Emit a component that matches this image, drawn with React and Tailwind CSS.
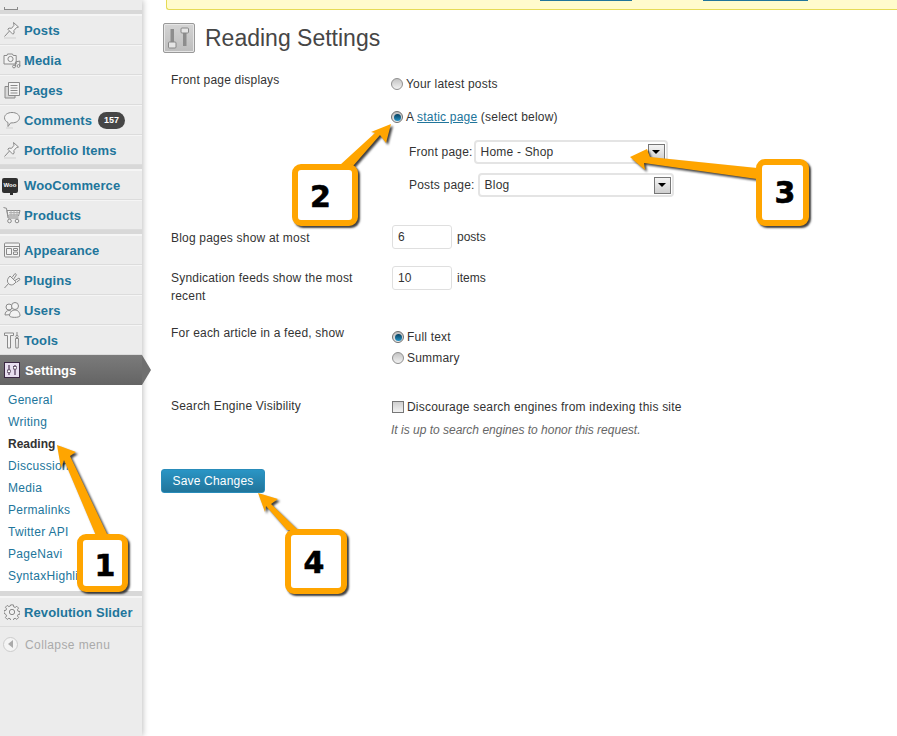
import { useState } from "react";

const iconClass = "w-[18px] h-[18px] shrink-0 fill-[#f3f3f3] stroke-[#8a8a8a]";

function PinIcon() {
    return (
        <svg viewBox="0 0 18 18" className={iconClass} strokeWidth="1">
            <path d="M10.500 1.500l5 4.500-2 .6-2.600 3 .2 2.600-1.300 1-5-5 1.200-1.100 2.600.2 2.400-3z" />
            <path d="M6.500 10L1.500 15.500" fill="none" />
            <path d="M1 17h12" fill="none" stroke="#cfcfcf" />
        </svg>
    );
}

function MediaIcon() {
    return (
        <svg viewBox="0 0 18 18" className={iconClass} strokeWidth="1">
            <path d="M1 4.500h3l.5-1.500h5l.7 1.500h3v8.500H1z" />
            <circle cx="7.500" cy="8" r="2.600" />
            <circle cx="11" cy="15.500" r="1.400" />
            <circle cx="15.500" cy="15" r="1.400" />
            <path d="M12.400 15.500V11l4.400-1v5" fill="none" />
        </svg>
    );
}

function PagesIcon() {
    return (
        <svg viewBox="0 0 18 18" className={iconClass} strokeWidth="1">
            <path d="M2 5.500h10v11.500H2z" fill="#d8d8d8" />
            <path d="M5.500 1.500h11v13h-11z" />
            <path d="M7.500 4.500h7M7.500 7h7M7.500 9.500h7M7.500 12h7" fill="none" />
        </svg>
    );
}

function CommentIcon() {
    return (
        <svg viewBox="0 0 18 18" className={iconClass} strokeWidth="1">
            <path d="M9 1.500c4.400 0 7.500 2.300 7.500 5.200s-3.100 5.200-7.500 5.200H7.600L5 15.500v-4C3 10.600 1.500 9 1.500 6.700 1.500 3.800 4.600 1.500 9 1.500z" />
            <path d="M3 17h7" fill="none" stroke="#cfcfcf" />
        </svg>
    );
}

function WooIcon() {
    return (
        <div className="relative w-4 h-[15px] shrink-0 rounded-[2px] bg-[#2f2f2f] flex items-center justify-center ml-[-1px] mr-[3px]">
            <span className="text-[6px] font-bold leading-none text-white">Woo</span>
            <span className="absolute -bottom-[2px] left-[8px] w-[3px] h-[3px] bg-[#2f2f2f]"></span>
        </div>
    );
}

function CartIcon() {
    return (
        <svg viewBox="0 0 18 18" className={iconClass} strokeWidth="1">
            <path d="M.5 1.500l3 .8 1.500 9.700h10.500" fill="none" />
            <path d="M4 4.500h13l-1.500 5.500H5z" />
            <path d="M6 6.500h10M6 8.300h9.500M8 4.500v5.500M11 4.500v5.500M14 4.500v5.500" fill="none" stroke="#b0b0b0" />
            <circle cx="6.500" cy="15" r="1.800" />
            <circle cx="14" cy="15" r="1.800" />
        </svg>
    );
}

function AppearanceIcon() {
    return (
        <svg viewBox="0 0 18 18" className={iconClass} strokeWidth="1">
            <rect x="1.500" y="2" width="15" height="14" rx="1" />
            <path d="M1.500 5.500h15" fill="none" />
            <path d="M3.500 7.500h5v6h-5zM10.500 7.500h4v2h-4zM10.500 11h4v2.500h-4z" />
        </svg>
    );
}

function PluginIcon() {
    return (
        <svg viewBox="0 0 18 18" className={iconClass} strokeWidth="1">
            <path d="M7 5l6 6-2 2c-1.700 1.300-3.800 1.300-5.300-.2S4 9 5.300 7.100z" />
            <path d="M9 6.500l3-4 1.500 1.200-2.800 4.300M12 9.500l4-2.500 1 1.500-3.500 2.700" />
            <path d="M5.500 12.500L1.500 17" fill="none" />
        </svg>
    );
}

function UsersIcon() {
    return (
        <svg viewBox="0 0 18 18" className={iconClass} strokeWidth="1">
            <circle cx="6" cy="6" r="3" />
            <circle cx="12" cy="5" r="3.500" />
            <path d="M2 14c0-3 1.800-4.500 4-4.500S9 11 9 13.500z" />
            <path d="M6.500 15c0-3.500 2.500-6 5.500-6s5 2.500 5 6c-1 1.800-9.500 1.800-10.500 0z" />
        </svg>
    );
}

function ToolsIcon() {
    return (
        <svg viewBox="0 0 18 18" className={iconClass} strokeWidth="1">
            <path d="M1.500 2h9v2.500H7.500V17h-3V4.500h-3z" />
            <path d="M14 1v4.500M12.500 7.500h3l-.3 9.500h-2.400z" />
            <circle cx="14" cy="5.500" r="1.200" />
        </svg>
    );
}

function SettingsIcon() {
    return (
        <svg viewBox="0 0 18 18" className="w-[18px] h-[18px] shrink-0" fill="none">
            <rect x="1.500" y="1.500" width="15" height="15" fill="#e8dff0" stroke="#3a2742" />
            <path d="M6 4v10M12 4v10" stroke="#6b5773" strokeWidth="1.500" />
            <rect x="4.500" y="9" width="3" height="2.500" fill="#fff" stroke="#3a2742" strokeWidth=".6" />
            <rect x="10.500" y="5.500" width="3" height="2.500" fill="#fff" stroke="#3a2742" strokeWidth=".6" />
        </svg>
    );
}

function GearIcon() {
    return (
        <svg viewBox="0 0 18 18" className="w-4 h-4 shrink-0 ml-[1px] mr-[1px] fill-[#efefef] stroke-[#7d7d7d]" strokeWidth="1">
            <path d="M7.500 1h3l.4 2.200 1.600.7 1.900-1.300 2 2-1.300 1.900.7 1.600 2.200.4v2.900l-2.200.4-.7 1.600 1.300 1.900-2 2-1.900-1.300-1.600.7-.4 2.200h-3l-.4-2.200-1.600-.7-1.900 1.300-2-2 1.300-1.900-.7-1.600L0 10.400V7.500l2.200-.4.7-1.600L1.600 3.600l2-2 1.900 1.300 1.600-.7z" />
            <circle cx="9" cy="9" r="3" />
        </svg>
    );
}

function MenuRow({ icon, label, badge }) {
    return (
        <div className="flex items-center h-[30px] pl-[3px] border-t border-t-[#f5f5f5] border-b border-b-[#dcdcdc] text-[13px] font-bold text-[#21759b]">
            {icon}
            <span className="ml-[3px] mt-[2px] tracking-[0.1px] whitespace-nowrap">{label}</span>
            {badge && (
                <span className="ml-[6px] mt-[1px] w-[27px] h-[17px] rounded-full bg-[#464646] text-white text-[9px] leading-[17px] text-center">
                    {badge}
                </span>
            )}
        </div>
    );
}

function Separator() {
    return <div className="h-[5px] bg-[#d8d8d8] border-b border-b-[#f5f5f5]"></div>;
}

function Radio({ checked }) {
    return (
        <span className={checked
            ? "inline-flex items-center justify-center w-3 h-3 shrink-0 rounded-full border border-[#6f6f6f] bg-gradient-to-b from-[#bdbdbd] to-[#eeeeee]"
            : "inline-flex items-center justify-center w-3 h-3 shrink-0 rounded-full border border-[#8f8f8f] bg-gradient-to-b from-[#c4c4c4] to-[#f2f2f2]"}
        >
            {checked && <span className="w-[7px] h-[7px] rounded-full bg-gradient-to-b from-[#08405f] to-[#2595c8]"></span>}
        </span>
    );
}

function SelectBox({ value, className }) {
    return (
        <div className={`flex items-center justify-between h-[24px] pl-[5px] pr-[1px] border-2 border-[#e4e4e4] rounded-[4px] bg-white text-[12px] text-[#333] ${className}`}>
            <span>{value}</span>
            <span className="flex items-center justify-center w-[17px] h-[17px] border border-[#777] bg-gradient-to-b from-[#f4f4f4] to-[#cfcfcf]">
                <span className="w-0 h-0 border-x-[4px] border-x-transparent border-t-[4px] border-t-black"></span>
            </span>
        </div>
    );
}

function NumberInput({ value, unit }) {
    return (
        <div className="flex items-center">
            <div className="w-[60px] h-[24px] pl-[5px] border border-[#dfdfdf] rounded-[3px] bg-white text-[12px] leading-[22px] text-[#333]">
                {value}
            </div>
            <span className="ml-[5px] text-[12px] text-[#333]">{unit}</span>
        </div>
    );
}

function Callout({ n, className }) {
    return (
        <div className={`absolute flex items-center justify-center border-[6px] border-[#ffa500] rounded-[9px] bg-white shadow-[2px_2px_2px_rgba(0,0,0,0.75)] font-['DejaVu_Sans',sans-serif] font-bold text-[30px] leading-none text-black [-webkit-text-stroke:0.6px_black] ${className}`}>
            {n}
        </div>
    );
}

const subMenu = ["General", "Writing", "Reading", "Discussion", "Media", "Permalinks", "Twitter API", "PageNavi", "SyntaxHighlighter"];

export default function App() {
    const [current] = useState("Reading");

    return (
        <div className="relative flex w-[897px] h-[736px] overflow-hidden bg-white font-['Liberation_Sans',Arial,sans-serif] text-[12px] text-[#333]">
            {/* Sidebar */}
            <aside className="w-[142px] shrink-0 bg-[#ececec] shadow-[1px_0_6px_rgba(0,0,0,0.25)] z-10">
                <div className="h-[10px] flex items-end pl-[4px]">
                    <div className="w-[14px] h-[3px] border-x border-b border-[#8a8a8a]"></div>
                </div>
                <Separator />
                <MenuRow icon={<PinIcon />} label="Posts" />
                <MenuRow icon={<MediaIcon />} label="Media" />
                <MenuRow icon={<PagesIcon />} label="Pages" />
                <MenuRow icon={<CommentIcon />} label="Comments" badge="157" />
                <MenuRow icon={<PinIcon />} label="Portfolio Items" />
                <Separator />
                <MenuRow icon={<WooIcon />} label="WooCommerce" />
                <MenuRow icon={<CartIcon />} label="Products" />
                <Separator />
                <MenuRow icon={<AppearanceIcon />} label="Appearance" />
                <MenuRow icon={<PluginIcon />} label="Plugins" />
                <MenuRow icon={<UsersIcon />} label="Users" />
                <MenuRow icon={<ToolsIcon />} label="Tools" />

                <div className="relative flex items-center h-[30px] pl-[3px] bg-gradient-to-b from-[#7b7b7b] to-[#646464] text-[13px] font-bold text-white">
                    <SettingsIcon />
                    <span className="ml-[4px] mt-[2px]">Settings</span>
                    <span className="absolute left-full top-0 w-0 h-0 border-y-[15px] border-y-transparent border-l-[9px] border-l-[#6f6f6f]"></span>
                </div>

                <div className="bg-white pt-[4px] h-[206px] overflow-hidden tracking-[0.3px]">
                    {subMenu.map((item) => (
                        <div
                            key={item}
                            className={item === current
                                ? "h-[22px] pl-2 leading-[22px] font-bold tracking-normal text-[#333]"
                                : "h-[22px] pl-2 leading-[22px] text-[#21759b]"}
                        >
                            {item}
                        </div>
                    ))}
                </div>
                <div className="h-[6px] bg-[#d8d8d8] border-b border-b-[#f5f5f5]"></div>

                <MenuRow icon={<GearIcon />} label="Revolution Slider" />
                <div className="flex items-center h-[34px] pl-[3px] text-[12px] text-[#aaa]">
                    <span className="flex items-center justify-center w-[15px] h-[15px] rounded-full border border-[#ccc] bg-[#f4f4f4]">
                        <span className="w-0 h-0 border-y-[4px] border-y-transparent border-r-[5px] border-r-[#aaa]"></span>
                    </span>
                    <span className="ml-[7px] mt-[2px] tracking-[0.4px]">Collapse menu</span>
                </div>
            </aside>

            {/* Content */}
            <main className="flex-1 min-w-0">
                <div className="relative h-[10px] ml-[24px] border-l border-b border-[#e6db55] rounded-bl-[3px] bg-[#fffbcc]">
                    <span className="absolute top-0 left-[373px] w-[92px] h-px bg-[#21759b]"></span>
                    <span className="absolute top-0 left-[536px] w-[105px] h-px bg-[#21759b]"></span>
                </div>

                <div className="flex items-center mt-[13px] ml-[21px]">
                    <div className="flex items-center justify-center w-[32px] h-[30px] border border-[#999] rounded-[2px] bg-gradient-to-b from-[#d4d4d4] to-[#bdbdbd] shadow-[inset_0_0_0_1px_#e6e6e6]">
                        <svg viewBox="0 0 28 26" className="w-[28px] h-[26px]">
                            <rect x="5.500" y="4" width="3.500" height="14" fill="#8d8d8d" />
                            <rect x="18" y="6" width="3.500" height="15" fill="#8d8d8d" />
                            <rect x="3.500" y="17" width="7.500" height="6" rx="1" fill="#e5e5e5" stroke="#888" />
                            <rect x="16" y="3" width="7.500" height="5" rx="1" fill="#e5e5e5" stroke="#888" />
                        </svg>
                    </div>
                    <h1 className="ml-[10px] text-[23px] leading-[30px] text-[#464646]">Reading Settings</h1>
                </div>

                <div className="ml-[29px] mt-[17px] grid grid-cols-[221px_1fr]">
                    <div className="pt-[1px] tracking-[0.2px]">Front page displays</div>
                    <div className="h-[155px] tracking-[0.2px]">
                        <div className="flex items-center gap-[3px] mt-[5px] -ml-[1px]">
                            <Radio />
                            <span>Your latest posts</span>
                        </div>
                        <div className="flex items-center gap-[3px] mt-[15px] -ml-[1px]">
                            <Radio checked />
                            <span>A <span className="text-[#21759b] underline">static page</span> (select below)</span>
                        </div>
                        <div className="flex items-center mt-[14px] ml-[17px]">
                            <span>Front page:</span>
                            <SelectBox value="Home - Shop" className="ml-[1px] w-[194px]" />
                        </div>
                        <div className="flex items-center mt-[9px] ml-[17px]">
                            <span>Posts page:</span>
                            <SelectBox value="Blog" className="ml-[3px] w-[196px]" />
                        </div>
                    </div>

                    <div className="tracking-[0.2px] pt-[4px]">Blog pages show at most</div>
                    <div className="h-[41px]"><NumberInput value="6" unit="posts" /></div>

                    <div className="tracking-[0.2px] pt-[3px] leading-[18px] w-[200px]">Syndication feeds show the most recent</div>
                    <div className="h-[58px]"><NumberInput value="10" unit="items" /></div>

                    <div className="tracking-[0.2px]">For each article in a feed, show</div>
                    <div className="h-[72px] tracking-[0.2px]">
                        <div className="flex items-center gap-[3px] mt-[4px]">
                            <Radio checked />
                            <span>Full text</span>
                        </div>
                        <div className="flex items-center gap-[3px] mt-[3px]">
                            <Radio />
                            <span>Summary</span>
                        </div>
                    </div>

                    <div className="tracking-[0.2px] pt-[1px]">Search Engine Visibility</div>
                    <div className="tracking-[0.2px]">
                        <div className="flex items-center gap-[3px] mt-[2px]">
                            <span className="w-3 h-3 border border-[#777] bg-gradient-to-b from-[#cfcfcf] to-[#f2f2f2]"></span>
                            <span>Discourage search engines from indexing this site</span>
                        </div>
                        <div className="mt-[5px] -ml-px italic tracking-normal text-[#666]">It is up to search engines to honor this request.</div>
                    </div>
                </div>

                <button className="mt-[30px] ml-[19px] w-[104px] h-[24px] border border-[#298cba] rounded-[3px] bg-gradient-to-b from-[#2a95c5] to-[#21759b] text-[12px] tracking-[0.2px] text-white">
                    Save Changes
                </button>
            </main>

            {/* Annotation arrows */}
            <svg viewBox="0 0 897 736" className="absolute inset-0 z-20 w-[897px] h-[736px] pointer-events-none drop-shadow-[2px_2px_1px_rgba(0,0,0,0.75)]">
                <g fill="#ffa500">
                    <polygon points="57,445 76,452 70,456 108,536 97,538 64,460 61,468" />
                    <polygon points="391,124 386,143 380,135 353,166 340,165 375,133 371,132" />
                    <polygon points="630,157 647,149 650,157 757,168 757,179 644,163 645,170" />
                    <polygon points="258,493 278,499 271,504 298,530 287,530 266,506 265,512" />
                </g>
            </svg>
            <div className="absolute inset-0 z-30 pointer-events-none">
                <Callout n="1" className="left-[77px] top-[534px] w-[51px] h-[58px] pl-[5px] pt-[5px]" />
                <Callout n="2" className="left-[292px] top-[164px] w-[66px] h-[62px] pr-[9px] pt-[4px]" />
                <Callout n="3" className="left-[756px] top-[159px] w-[53px] h-[67px] pl-[5px]" />
                <Callout n="4" className="left-[285px] top-[529px] w-[62px] h-[65px] pr-[4px] pt-[2px]" />
            </div>
        </div>
    );
}
